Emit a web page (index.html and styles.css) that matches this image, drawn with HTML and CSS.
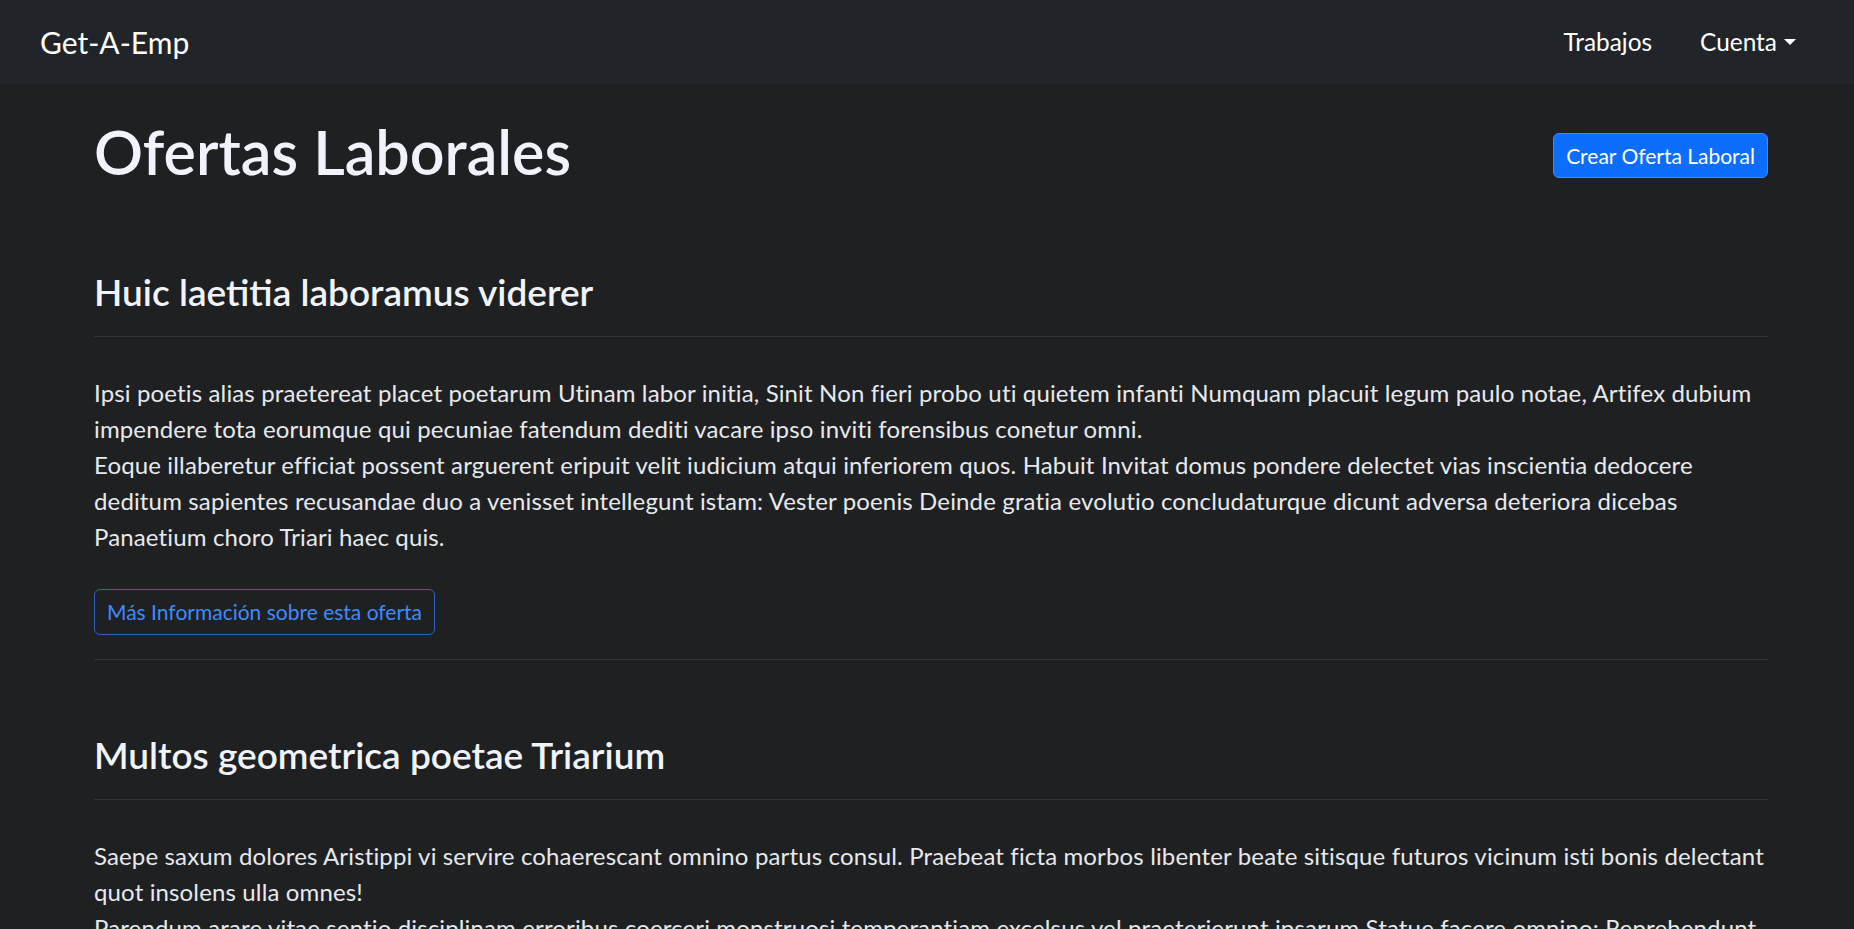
FILE: index.html
```html
<!DOCTYPE html>
<html lang="es">
<head>
<meta charset="utf-8">
<title>Get-A-Emp</title>
<link rel="stylesheet" href="styles.css">
</head>
<body>
<nav class="navbar">
  <a class="brand" href="#">Get-A-Emp</a>
  <ul class="nav">
    <li><a class="nav-link" href="#">Trabajos</a></li>
    <li><a class="nav-link dropdown" href="#">Cuenta<span class="caret"></span></a></li>
  </ul>
</nav>
<main class="container">
  <div class="page-header">
    <h1>Ofertas Laborales</h1>
    <a class="btn btn-primary" href="#">Crear Oferta Laboral</a>
  </div>

  <article class="job">
    <h2>Huic laetitia laboramus viderer</h2>
    <hr>
    <p>Ipsi poetis alias praetereat placet poetarum Utinam labor initia, Sinit Non fieri probo uti quietem infanti Numquam placuit legum paulo notae, Artifex dubium<br>impendere tota eorumque qui pecuniae fatendum dediti vacare ipso inviti forensibus conetur omni.<br>Eoque illaberetur efficiat possent arguerent eripuit velit iudicium atqui inferiorem quos. Habuit Invitat domus pondere delectet vias inscientia dedocere<br>deditum sapientes recusandae duo a venisset intellegunt istam: Vester poenis Deinde gratia evolutio concludaturque dicunt adversa deteriora dicebas<br>Panaetium choro Triari haec quis.</p>
    <div class="actions"><a class="btn btn-outline" href="#">Más Información sobre esta oferta</a></div>
    <hr class="end">
  </article>

  <article class="job second">
    <h2>Multos geometrica poetae Triarium</h2>
    <hr>
    <p>Saepe saxum dolores Aristippi vi servire cohaerescant omnino partus consul. Praebeat ficta morbos libenter beate sitisque futuros vicinum isti bonis delectant<br>quot insolens ulla omnes!<br>Parendum arare vitae sentio disciplinam erroribus coerceri monstruosi temperantiam excelsus vel praeterierunt ipsarum Statue facere omnino: Reprehendunt<br>cognitionis nostrae mediocritatem viderentur perfecto sermone.</p>
  </article>
</main>
</body>
</html>
```
FILE: styles.css
```css
html {
  overflow: hidden;
}

body {
  margin: 0;
  background: #1f2022;
  color: #e6e9ed;
  font-family: Lato, "Open Sans", sans-serif;
}

a {
  text-decoration: none;
}

.navbar {
  box-sizing: border-box;
  height: 84px;
  background: #212529;
  display: flex;
  align-items: center;
  justify-content: space-between;
  padding: 0 58px 0 40px;
}

.brand {
  font-size: 30px;
  line-height: 45px;
  color: #fff;
}

.nav {
  display: flex;
  gap: 48px;
  list-style: none;
  margin: 0;
  padding: 0;
}

.nav-link {
  display: flex;
  align-items: center;
  font-size: 24.4px;
  line-height: 36px;
  color: #fff;
}

.caret {
  width: 0;
  height: 0;
  border-top: 6px solid #fff;
  border-left: 6.5px solid transparent;
  border-right: 6.5px solid transparent;
  margin-left: 7px;
}

.container {
  width: 1674px;
  margin: 0 0 0 94px;
}

.page-header {
  display: flex;
  justify-content: space-between;
  align-items: center;
  margin-top: 32px;
}

h1 {
  margin: 0;
  font-size: 61px;
  line-height: 72px;
  font-weight: 600;
  color: #f0f4fa;
}

.page-header .btn {
  margin-top: 7px;
}

h2 {
  margin: 82px 0 0;
  font-size: 37px;
  line-height: 44px;
  font-weight: 600;
  color: #f0f4fa;
}

.second h2 {
  margin-top: 73px;
}

hr {
  border: 0;
  border-top: 1px solid #313439;
  margin: 22px 0 0;
}

hr.end {
  margin-top: 24px;
}

p {
  margin: 38px 0 0;
  font-size: 24px;
  line-height: 36px;
  letter-spacing: 0.14px;
}

.actions {
  display: flex;
  margin-top: 34px;
}

.btn {
  display: inline-block;
  font-size: 21px;
  line-height: 31.5px;
  padding: 6px 12px;
  border: 1px solid transparent;
  border-radius: 6px;
}

.btn-primary {
  background: #0d6efd;
  border-color: #3d8bfd;
  color: #fff;
}

.btn-outline {
  color: #3d8bfd;
  border-color: #2f62c0;
}
```
